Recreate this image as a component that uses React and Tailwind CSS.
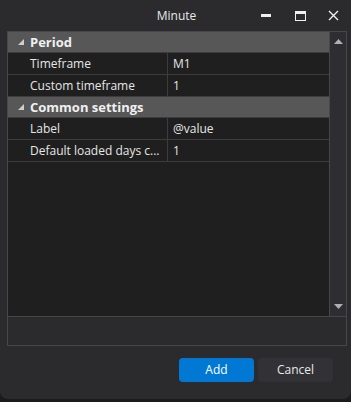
import React from "react";

const Tri = () => (
  <svg width="6" height="6" viewBox="0 0 6 6" className="shrink-0">
    <polygon points="6,0 6,6 0,6" fill="#cfcfcf" />
  </svg>
);

function Header({ label }) {
  return (
    <div className="flex h-[21px] items-center bg-[#575757] border-b border-[#3c3c3c]">
      <div className="flex w-[22px] justify-end pr-[6px]">
        <Tri />
      </div>
      <span className="font-bold text-[13px] text-[#f0f0f0] leading-none">{label}</span>
    </div>
  );
}

function Row({ name, value }) {
  return (
    <div className="flex h-[22px] items-center border-b border-[#3c3c3c] bg-[#1f1f1f] text-[12px] text-[#e6e6e6]">
      <div className="w-[160px] h-full flex items-center pl-[22px] border-r border-[#3c3c3c] whitespace-nowrap overflow-hidden">
        {name}
      </div>
      <div className="pl-[5px]">{value}</div>
    </div>
  );
}

export default function App() {
  return (
    <div
      className="w-[351px] h-[402px] bg-[#1b1b1b] overflow-hidden"
      style={{ fontFamily: '"Open Sans", "Noto Sans", sans-serif' }}
    >
      <div className="h-[399px] bg-[#2b2b2e] rounded-b-[8px] flex flex-col relative">
        <div className="h-[31px] flex items-center justify-center text-[12px] text-[#e8e8e8] pl-[2px]">
          Minute
        </div>
        <div className="absolute top-0 right-0 h-[31px] flex items-center">
          <div className="w-[34px] flex justify-center">
            <div className="w-[10px] h-[3px] bg-[#f0f0f0]" />
          </div>
          <div className="w-[34px] flex justify-center">
            <div className="w-[11px] h-[10px] border border-[#f0f0f0] border-t-[3px]" />
          </div>
          <div className="w-[34px] flex justify-center pr-[2px]">
            <svg width="11" height="11" viewBox="0 0 11 11">
              <path d="M1 1 L10 10 M10 1 L1 10" stroke="#f0f0f0" strokeWidth="1.4" />
            </svg>
          </div>
        </div>

        <div className="ml-[7px] w-[340px] border border-[#474749] flex flex-col">
          <div className="flex h-[284px]">
            <div className="flex-1 bg-[#1f1f1f] flex flex-col">
              <Header label="Period" />
              <Row name="Timeframe" value="M1" />
              <Row name="Custom timeframe" value="1" />
              <Header label="Common settings" />
              <Row name="Label" value="@value" />
              <Row name="Default loaded days c..." value="1" />
            </div>
            <div className="w-[17px] border-l border-[#474749] bg-[#2e2e32] flex flex-col justify-between items-center py-[7px]">
              <svg width="9" height="5" viewBox="0 0 9 5">
                <polygon points="4.5,0 9,5 0,5" fill="#b0b0b0" />
              </svg>
              <svg width="9" height="5" viewBox="0 0 9 5">
                <polygon points="0,0 9,0 4.5,5" fill="#b0b0b0" />
              </svg>
            </div>
          </div>
          <div className="h-[29px] border-t border-[#474749] bg-[#2b2b2e]" />
        </div>

        <div className="flex justify-end gap-[4px] pr-[18px] mt-[12px]">
          <button className="w-[75px] h-[24px] rounded-[4px] bg-[#0078d4] text-[12px] text-white">
            Add
          </button>
          <button className="w-[75px] h-[24px] rounded-[4px] bg-[#323236] text-[12px] text-[#e8e8e8]">
            Cancel
          </button>
        </div>
      </div>
    </div>
  );
}
